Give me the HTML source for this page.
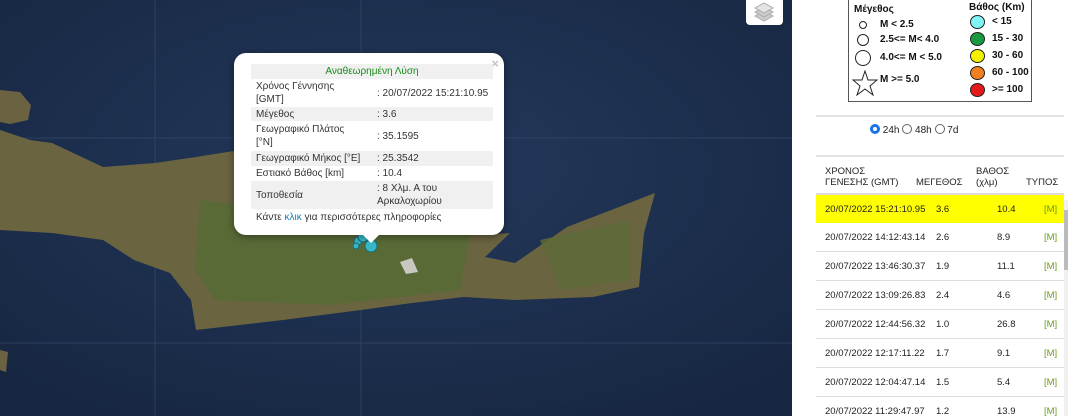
<!DOCTYPE html>
<html><head><meta charset="utf-8"><style>
*{margin:0;padding:0;box-sizing:border-box}
html,body{width:1068px;height:416px;overflow:hidden}
body{position:relative;background:#fff;font-family:"Liberation Sans","DejaVu Sans",sans-serif}
#map{position:absolute;left:0;top:0;width:792px;height:416px;background:#1c2e4c;overflow:hidden}
.pop{position:absolute;left:234px;top:53px;width:270px;height:182px;background:#fff;border-radius:12px;box-shadow:0 2px 8px rgba(0,0,0,.4)}
.pop table{position:absolute;left:17px;top:11px;width:242px;border-collapse:collapse;font-size:10px;color:#333;table-layout:fixed}
.pop td{padding:0 5px;vertical-align:middle;line-height:13px;white-space:nowrap;overflow:hidden}
.g{background:#f0f0f0}
.tip{position:absolute;left:362px;top:234px;width:0;height:0;border-left:9px solid transparent;border-right:9px solid transparent;border-top:9px solid #fff}
.x{position:absolute;right:5px;top:3px;color:#c3c3c3;font-size:13px;font-weight:bold}
.lay{position:absolute;left:746px;top:0;width:37px;height:25px;background:#fff;border-radius:0 0 4px 4px}
.legend{position:absolute;left:848px;top:-2px;width:184px;height:104px;border:1px solid #555;font-size:10px;font-weight:bold;color:#111}
.legend span{position:absolute;white-space:nowrap}
.c{position:absolute;border:1px solid #222;border-radius:50%}
hr{position:absolute;left:816px;width:248px;border:0;border-top:2px solid #e5e5e5}
.rad{position:absolute;top:124px;left:870px;font-size:10px;color:#222}
.tab{position:absolute;left:816px;top:160px;width:248px;font-size:9.5px;color:#222}
.row{height:29px;border-bottom:1px solid #ddd;position:relative}
.row span{position:absolute;top:9px;white-space:nowrap}
</style></head><body>
<div id="map">
<svg width="792" height="416" style="position:absolute;left:0;top:0">
<defs><radialGradient id="s" cx="50%" cy="40%" r="70%"><stop offset="0" stop-color="#24395c"/><stop offset="1" stop-color="#172742"/></radialGradient></defs>
<rect width="792" height="416" fill="url(#s)"/>
<g stroke="#3a4e6e" stroke-width="1" opacity=".6"><line x1="155" y1="0" x2="155" y2="416"/><line x1="361" y1="0" x2="361" y2="416"/><line x1="0" y1="138" x2="792" y2="138"/><line x1="0" y1="343" x2="792" y2="343"/></g>
<path d="M0,90 L20,92 L31,105 L28,120 L10,124 L0,122Z" fill="#6a6240"/>
<path d="M0,130 L30,140 L52,143 L103,167 L155,163 L196,157 L240,150 L480,235 L510,233 L485,257 L515,263 L567,227 L619,207 L655,193 L644,233 L639,287 L593,297 L515,300 L464,297 L412,303 L361,310 L283,320 L196,330 L191,300 L170,273 L134,260 L103,240 L52,233 L0,230Z" fill="#6a6440"/>
<path d="M200,200 L470,235 L460,290 L330,305 L215,300 L195,270Z" fill="#566b35" opacity=".85"/>
<path d="M540,240 L630,220 L630,280 L560,290Z" fill="#5c6a38" opacity=".8"/>
<path d="M400,262 L412,258 L418,272 L406,274Z" fill="#c8c8c0"/>
<path d="M0,350 L8,352 L6,372 L0,370Z" fill="#6a6240"/>
<circle cx="371" cy="246" r="6" fill="#36b8c8" stroke="#1a6a78"/><circle cx="358" cy="241" r="4" fill="#36b8c8" stroke="#1a6a78"/><circle cx="363" cy="237" r="5" fill="#36b8c8" stroke="#1a6a78"/><circle cx="356" cy="246" r="3" fill="#36b8c8" stroke="#1a6a78"/>
</svg>
<div class="lay"><svg width="37" height="25"><g fill="#ccc" stroke="#aaa"><path d="M9,16 L18,11 L27,16 L18,21Z"/><path d="M9,12 L18,7 L27,12 L18,17Z"/><path d="M9,8 L18,3 L27,8 L18,13Z" fill="#e4e4e4"/></g></svg></div>
</div>
<div class="pop"><div class="x">×</div>
<table>
<colgroup><col style="width:121px"><col style="width:121px"></colgroup>
<tr class="g" style="height:15px"><td colspan="2" style="text-align:center;color:#1a8a1a">Αναθεωρημένη Λύση</td></tr>
<tr style="height:28px"><td>Χρόνος Γέννησης<br>[GMT]</td><td>: 20/07/2022 15:21:10.95</td></tr>
<tr class="g" style="height:14px"><td>Μέγεθος</td><td>: 3.6</td></tr>
<tr style="height:30px"><td>Γεωγραφικό Πλάτος<br>[°N]</td><td>: 35.1595</td></tr>
<tr class="g" style="height:15px"><td>Γεωγραφικό Μήκος [°E]</td><td>: 25.3542</td></tr>
<tr style="height:15px"><td>Εστιακό Βάθος [km]</td><td>: 10.4</td></tr>
<tr class="g" style="height:28px"><td>Τοποθεσία</td><td>: 8 Χλμ. Α του<br>Αρκαλοχωρίου</td></tr>
<tr style="height:16px"><td colspan="2">Κάντε <span style="color:#1a7ab8">κλικ</span> για περισσότερες πληροφορίες</td></tr>
</table></div>
<div class="tip"></div>
<div class="legend">
<span style="left:5px;top:5px">Μέγεθος</span>
<div class="c" style="left:10px;top:22px;width:8px;height:8px"></div><span style="left:31px;top:20px">M &lt; 2.5</span>
<div class="c" style="left:8px;top:35px;width:12px;height:12px"></div><span style="left:31px;top:35px">2.5&lt;= M&lt; 4.0</span>
<div class="c" style="left:6px;top:51px;width:16px;height:16px"></div><span style="left:31px;top:53px">4.0&lt;= M &lt; 5.0</span>
<svg style="position:absolute;left:3px;top:71px" width="26" height="26"><path d="M13,1 L16,10 L25,10 L18,16 L21,25 L13,19 L5,25 L8,16 L1,10 L10,10Z" fill="none" stroke="#222"/></svg>
<span style="left:31px;top:75px">M &gt;= 5.0</span>
<span style="left:120px;top:3px">Βάθος (Km)</span>
<div class="c" style="left:121px;top:16px;width:15px;height:14px;background:#7ff5f5"></div><span style="left:143px;top:17px">&lt; 15</span>
<div class="c" style="left:121px;top:33px;width:15px;height:14px;background:#1a9a40"></div><span style="left:143px;top:34px">15 - 30</span>
<div class="c" style="left:121px;top:50px;width:15px;height:14px;background:#f4f000"></div><span style="left:143px;top:51px">30 - 60</span>
<div class="c" style="left:121px;top:67px;width:15px;height:14px;background:#f28020"></div><span style="left:143px;top:68px">60 - 100</span>
<div class="c" style="left:121px;top:84px;width:15px;height:14px;background:#e41a1a"></div><span style="left:143px;top:85px">&gt;= 100</span>
</div>
<hr style="top:115px"><hr style="top:155px">
<div class="rad"><span style="display:inline-block;width:10px;height:10px;border-radius:50%;border:3px solid #1a73e8;vertical-align:-1px"></span> 24h <span style="display:inline-block;width:10px;height:10px;border-radius:50%;border:1px solid #666;vertical-align:-1px"></span> 48h <span style="display:inline-block;width:10px;height:10px;border-radius:50%;border:1px solid #666;vertical-align:-1px"></span> 7d</div>
<div class="tab">
<div class="row" style="height:35px;border-bottom:2px solid #ddd"><span style="left:9px;top:6px;line-height:11px">ΧΡΟΝΟΣ<br>ΓΕΝΕΣΗΣ (GMT)</span><span style="left:100px;top:17px">ΜΕΓΕΘΟΣ</span><span style="left:160px;top:6px;line-height:11px">ΒΑΘΟΣ<br>(χλμ)</span><span style="left:210px;top:17px">ΤΥΠΟΣ</span></div>
<div class="row" style="background:#ffff00;height:28px;border-bottom:0"><span style="left:9px">20/07/2022 15:21:10.95</span><span style="left:120px">3.6</span><span style="left:181px">10.4</span><span style="left:228px;color:#6a9a20">[M]</span></div>
<div class="row"><span style="left:9px">20/07/2022 14:12:43.14</span><span style="left:120px">2.6</span><span style="left:181px">8.9</span><span style="left:228px;color:#6a9a20">[M]</span></div>
<div class="row"><span style="left:9px">20/07/2022 13:46:30.37</span><span style="left:120px">1.9</span><span style="left:181px">11.1</span><span style="left:228px;color:#6a9a20">[M]</span></div>
<div class="row"><span style="left:9px">20/07/2022 13:09:26.83</span><span style="left:120px">2.4</span><span style="left:181px">4.6</span><span style="left:228px;color:#6a9a20">[M]</span></div>
<div class="row"><span style="left:9px">20/07/2022 12:44:56.32</span><span style="left:120px">1.0</span><span style="left:181px">26.8</span><span style="left:228px;color:#6a9a20">[M]</span></div>
<div class="row"><span style="left:9px">20/07/2022 12:17:11.22</span><span style="left:120px">1.7</span><span style="left:181px">9.1</span><span style="left:228px;color:#6a9a20">[M]</span></div>
<div class="row"><span style="left:9px">20/07/2022 12:04:47.14</span><span style="left:120px">1.5</span><span style="left:181px">5.4</span><span style="left:228px;color:#6a9a20">[M]</span></div>
<div class="row"><span style="left:9px">20/07/2022 11:29:47.97</span><span style="left:120px">1.2</span><span style="left:181px">13.9</span><span style="left:228px;color:#6a9a20">[M]</span></div>
</div>
<div style="position:absolute;left:1064px;top:200px;width:4px;height:216px;background:#f0f0f0"><div style="height:60px;margin-top:10px;background:#bbb"></div></div>
</body></html>
